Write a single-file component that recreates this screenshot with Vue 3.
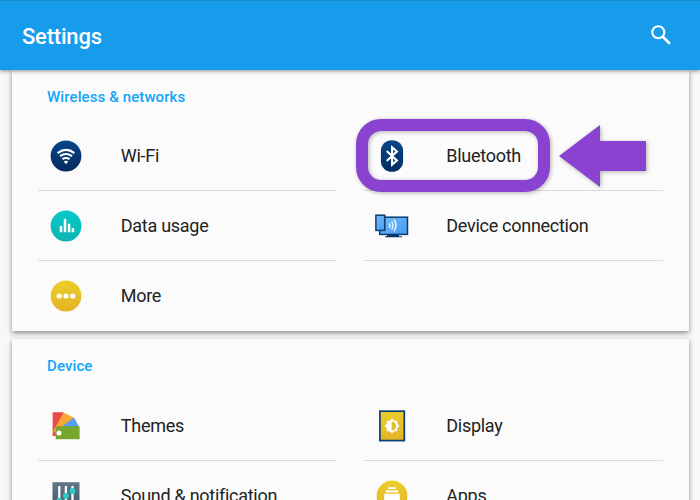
<script setup>
const sections = [
  {
    title: 'Wireless & networks',
    items: [
      { icon: 'wifi', label: 'Wi-Fi' },
      { icon: 'bluetooth', label: 'Bluetooth' },
      { icon: 'data', label: 'Data usage' },
      { icon: 'device', label: 'Device connection' },
      { icon: 'more', label: 'More', last: true },
    ],
  },
  {
    title: 'Device',
    items: [
      { icon: 'themes', label: 'Themes' },
      { icon: 'display', label: 'Display' },
      { icon: 'sound', label: 'Sound & notification' },
      { icon: 'apps', label: 'Apps' },
    ],
  },
]
</script>

<template>
  <div class="screen">
    <header class="bar">
      <h1>Settings</h1>
      <svg class="search" width="20" height="20" viewBox="0 0 20 20">
        <circle cx="7.3" cy="7.2" r="6" fill="none" stroke="#fff" stroke-width="2.1" />
        <path d="M11.3 11.3L18.9 18.7" stroke="#fff" stroke-width="2.6" />
      </svg>
    </header>
    <main>
      <section v-for="s in sections" :key="s.title" class="card">
        <h2>{{ s.title }}</h2>
        <div class="grid">
          <div v-for="i in s.items" :key="i.icon" class="row" :class="{ last: i.last }">
            <svg class="icon" width="40" height="40" viewBox="0 0 40 40">
              <defs>
                <linearGradient id="navy" x1="0" y1="0" x2="0" y2="1"><stop offset="0" stop-color="#07458a" /><stop offset="1" stop-color="#052c5e" /></linearGradient>
                <linearGradient id="teal" x1="0" y1="0" x2="0" y2="1"><stop offset="0" stop-color="#08cac6" /><stop offset="1" stop-color="#0db4b4" /></linearGradient>
                <linearGradient id="gold" x1="0" y1="0" x2="0" y2="1"><stop offset="0" stop-color="#ebcd2b" /><stop offset="1" stop-color="#e3b424" /></linearGradient>
                <linearGradient id="sky" x1="0" y1="0" x2="1" y2="1"><stop offset="0" stop-color="#78bdfa" /><stop offset="1" stop-color="#459af0" /></linearGradient>
                <linearGradient id="slate" x1="0" y1="0" x2="0" y2="1"><stop offset="0" stop-color="#5f7787" /><stop offset="1" stop-color="#435a6a" /></linearGradient>
              </defs>
              <g v-if="i.icon === 'wifi'">
                <circle cx="20" cy="20" r="15.4" fill="url(#navy)" />
                <path d="M11.6 17.1Q20 10.7 28.4 17.1M14 20.2Q20 15.8 26 20.2M16.4 23.2Q20 20.7 23.6 23.2" fill="none" stroke="#fff" stroke-width="2.1" />
                <path d="M17.8 25.4Q20 23.9 22.2 25.4L20 28.2z" fill="#fff" />
              </g>
              <g v-else-if="i.icon === 'bluetooth'">
                <rect x="8.9" y="4.2" width="22.2" height="31.6" rx="10.8" fill="url(#navy)" />
                <path d="M14.7 15.1L24.9 24.5L20.1 28.6V11.4L24.9 15.5L14.7 24.9" fill="none" stroke="#fff" stroke-width="2.1" />
              </g>
              <g v-else-if="i.icon === 'data'">
                <circle cx="20" cy="20" r="15.4" fill="url(#teal)" />
                <path d="M15 26.3v-6.2M19 26.3V12.7M23.1 26.3v-8.6M26.9 26.3v-4" stroke="#fff" stroke-width="2.5" />
              </g>
              <g v-else-if="i.icon === 'device'">
                <path d="M15 29h12v1.2h3v1.1H13v-1.1h2z" fill="#0a3568" />
                <rect x="7.7" y="11.2" width="27.8" height="17.2" fill="url(#sky)" stroke="#0a3d78" stroke-width="1.5" />
                <rect x="3.9" y="9.2" width="8.9" height="15.2" fill="url(#sky)" stroke="#0a3d78" stroke-width="1.5" />
                <path d="M17.2 17.4q1.8 2.2 0 4.4M19.6 15.6q3 4 0 8M22 13.8q4.3 5.7 0 11.4" fill="none" stroke="#e6f4ff" stroke-width="1.5" />
              </g>
              <g v-else-if="i.icon === 'more'">
                <circle cx="20" cy="20" r="15.4" fill="url(#gold)" />
                <g fill="#fff"><circle cx="13.2" cy="20" r="2.6" /><circle cx="20" cy="20" r="2.6" /><circle cx="26.8" cy="20" r="2.6" /></g>
              </g>
              <g v-else-if="i.icon === 'themes'">
                <path d="M6.6 6.2h11L9.6 30h-3z" fill="#e84b4b" />
                <path d="M17.6 6.4L28 11.7L10 28L7.3 25z" fill="#f8a833" />
                <path d="M28 11.4L32.9 20.4L10 29L8.5 26z" fill="#529ff4" />
                <path d="M9.7 20.2H33.6V33.2H9.7z" fill="#78a52c" />
                <circle cx="13" cy="26.9" r="2.5" fill="#fff" />
              </g>
              <g v-else-if="i.icon === 'display'">
                <rect x="7.9" y="5.2" width="24.4" height="29.4" fill="url(#gold)" stroke="#0a3d78" stroke-width="1.7" />
                <path d="M20 12.5L22.3 14.7H25.3V17.7L27.5 20L25.3 22.3V25.3H22.3L20 27.5L17.7 25.3H14.7V22.3L12.5 20L14.7 17.7V14.7H17.7z" fill="#fff" />
                <path d="M19.6 15.5a4.5 4.5 0 0 1 0 9z" fill="#e6bd28" />
              </g>
              <g v-else-if="i.icon === 'sound'">
                <rect x="6.5" y="6.2" width="27" height="27" fill="url(#slate)" />
                <path d="M13.3 10v20M19.9 10v20M26.5 10v20" stroke="#fff" stroke-width="2.3" />
                <g fill="#2acbc8"><circle cx="13.3" cy="24.6" r="2.9" /><circle cx="19.9" cy="19.9" r="2.9" /><circle cx="26.5" cy="15" r="2.9" /></g>
              </g>
              <g v-else>
                <circle cx="20" cy="20" r="15.4" fill="url(#gold)" />
                <path d="M16 11.3h8v1.8h-8zM13.9 14.3h12.2v2.2H13.9zM12.2 17.8h15.6V28H12.2z" fill="#fff" />
              </g>
            </svg>
            <span>{{ i.label }}</span>
          </div>
        </div>
      </section>
    </main>
    <div class="highlight"></div>
    <svg class="arrow" width="87" height="62" viewBox="0 0 87 62">
      <path d="M0 31L41 0V16H87V46H41V62z" fill="#8a42d0" />
    </svg>
  </div>
</template>

<style>
body {
  overflow: hidden;
}
</style>

<style scoped>
.screen {
  position: relative;
  width: 700px;
  height: 500px;
  overflow: hidden;
  background: #f8f8f8;
  color: #222;
  font-family: Roboto, sans-serif;
}
.bar {
  position: relative;
  z-index: 1;
  display: flex;
  align-items: center;
  justify-content: space-between;
  box-sizing: border-box;
  height: 69.5px;
  padding: 2px 29px 0 22px;
  border-top: 1px solid #128acb;
  background: #169ceb;
  box-shadow: 0 1px 4px rgba(0, 0, 0, 0.45);
}
h1 {
  margin: 0;
  color: #fff;
  font-size: 22px;
  font-weight: 500;
  letter-spacing: -0.2px;
}
.search {
  margin-bottom: 3px;
}
main {
  display: flex;
  flex-direction: column;
  gap: 8.5px;
  padding: 0 11px 0 12px;
}
.card {
  background: #fbfbfb;
  box-shadow: 0 2px 5px rgba(0, 0, 0, 0.45);
}
h2 {
  box-sizing: border-box;
  height: 52px;
  margin: 0;
  padding: 18px 0 0 35px;
  color: #12a5f8;
  font-size: 15px;
  font-weight: 500;
  letter-spacing: 0.1px;
  line-height: 18px;
}
.grid {
  display: grid;
  grid-template-columns: 299px 299px;
  grid-auto-rows: 69.7px;
  column-gap: 26.5px;
  padding-left: 26px;
}
.row {
  display: flex;
  align-items: center;
  box-sizing: border-box;
  border-bottom: 1px solid #dcdcdc;
  font-size: 18px;
  letter-spacing: -0.28px;
}
.row.last {
  border-color: transparent;
}
.icon {
  margin: 1px 34.5px 0 8.3px;
}
.highlight {
  position: absolute;
  left: 356px;
  top: 119px;
  z-index: 2;
  box-sizing: border-box;
  width: 194px;
  height: 73px;
  border: 12px solid #8a42d0;
  border-radius: 25px;
  filter: drop-shadow(1px 1px 2px rgba(0, 0, 0, 0.3));
}
.arrow {
  position: absolute;
  left: 559px;
  top: 125px;
  z-index: 2;
  overflow: visible;
  filter: drop-shadow(1px 1px 2px rgba(0, 0, 0, 0.3));
}
</style>
